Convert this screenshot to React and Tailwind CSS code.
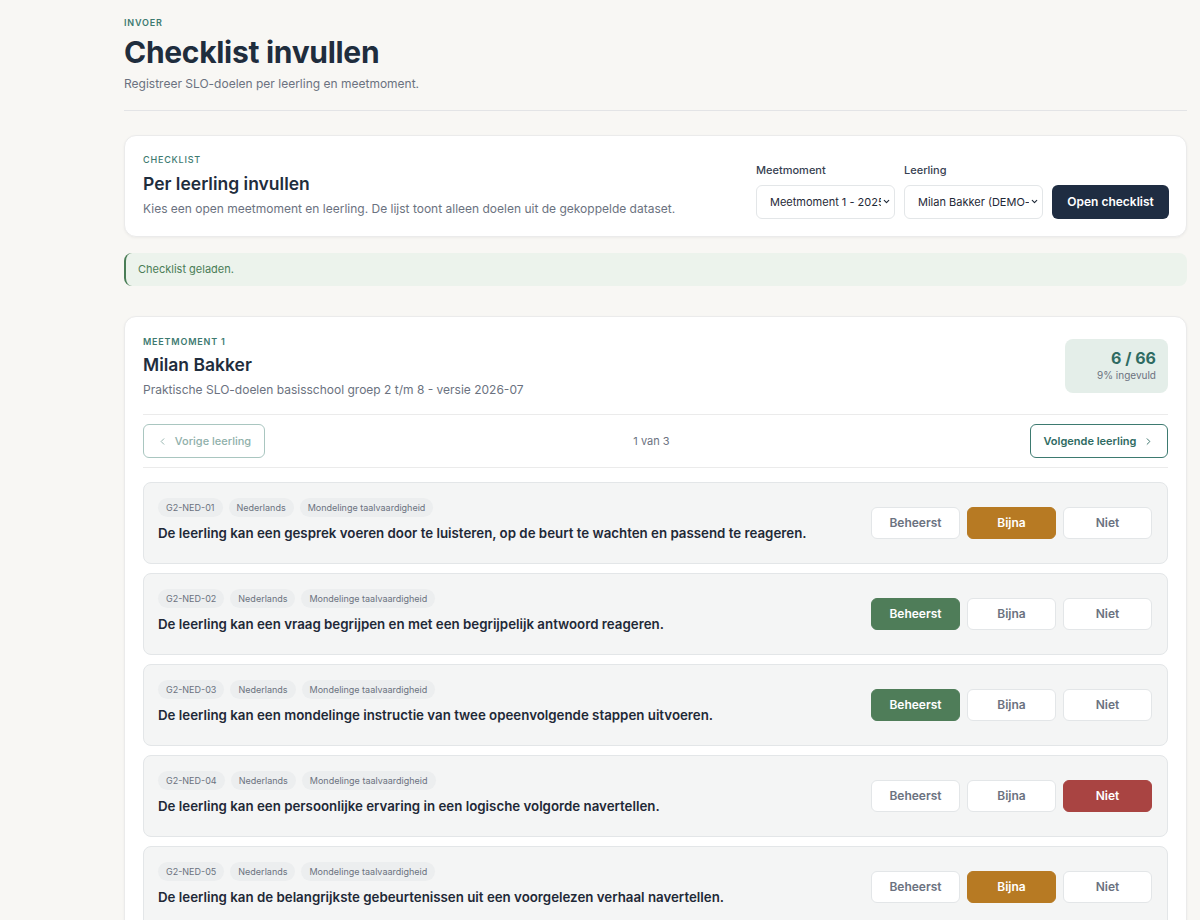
import { ChevronLeft, ChevronRight, ChevronDown } from 'lucide-react';

const goals = [
  { code: 'G2-NED-01', text: 'De leerling kan een gesprek voeren door te luisteren, op de beurt te wachten en passend te reageren.', value: 'bijna' },
  { code: 'G2-NED-02', text: 'De leerling kan een vraag begrijpen en met een begrijpelijk antwoord reageren.', value: 'beheerst' },
  { code: 'G2-NED-03', text: 'De leerling kan een mondelinge instructie van twee opeenvolgende stappen uitvoeren.', value: 'beheerst' },
  { code: 'G2-NED-04', text: 'De leerling kan een persoonlijke ervaring in een logische volgorde navertellen.', value: 'niet' },
  { code: 'G2-NED-05', text: 'De leerling kan de belangrijkste gebeurtenissen uit een voorgelezen verhaal navertellen.', value: 'bijna' },
];

const options = [
  { key: 'beheerst', label: 'Beheerst', active: 'bg-[#4f7d59] border-[#4f7d59] text-white' },
  { key: 'bijna', label: 'Bijna', active: 'bg-[#b77a23] border-[#b77a23] text-white' },
  { key: 'niet', label: 'Niet', active: 'bg-[#a94442] border-[#a94442] text-white' },
];

const Chip = ({ children }) => (
  <span className="h-[19px] px-2 rounded-full bg-[#eceeef] text-[9px] text-[#6b7280] flex items-center">
    {children}
  </span>
);

const GoalRow = ({ goal }) => (
  <div className="h-[82px] rounded-lg border border-[#e3e6e8] bg-[#f4f5f5] flex justify-between pl-[14px] pr-[15px]">
    <div className="flex flex-col gap-[7px] pt-[15px]">
      <div className="flex gap-[6px]">
        <Chip>{goal.code}</Chip>
        <Chip>Nederlands</Chip>
        <Chip>Mondelinge taalvaardigheid</Chip>
      </div>
      <div className="text-[13.3px] font-semibold text-[#1f2937]">{goal.text}</div>
    </div>
    <div className="flex gap-[7px] self-center">
      {options.map((o) => (
        <button
          key={o.key}
          className={`w-[89px] h-[32px] rounded-md border text-[12px] font-semibold ${
            goal.value === o.key ? o.active : 'bg-white border-[#e3e6e8] text-[#6b7280]'
          }`}
        >
          {o.label}
        </button>
      ))}
    </div>
  </div>
);

const Select = ({ label, value }) => (
  <div className="flex flex-col gap-[6px]">
    <span className="text-[11px] text-[#374151] font-medium">{label}</span>
    <div className="w-[139px] h-[34px] rounded-md border border-[#e3e6e8] bg-white flex items-center pl-[13px] pr-[3px] gap-[1px]">
      <span className="text-[11px] text-[#1f2937] whitespace-nowrap overflow-hidden flex-1 min-w-0">{value}</span>
      <ChevronDown size={9} strokeWidth={3} className="text-[#1f2937] shrink-0" />
    </div>
  </div>
);

export default function App() {
  return (
    <div className="min-h-[920px] bg-[#f8f7f4] pl-[124px] pr-[13px] font-['Inter',sans-serif]">
      <header className="pt-[16px] pb-[17px] border-b border-[#e3e4e6]">
        <div className="text-[9px] font-semibold tracking-[0.8px] text-[#3d7a70]">INVOER</div>
        <h1 className="mt-[4px] text-[30px] leading-[36px] font-bold text-[#1f2d3d] tracking-[-0.3px]">Checklist invullen</h1>
        <p className="mt-[5px] text-[12px] text-[#6b7280]">Registreer SLO-doelen per leerling en meetmoment.</p>
      </header>

      <section className="mt-[24px] h-[102px] rounded-xl bg-white border border-[#ebebeb] shadow-[0_1px_3px_rgba(0,0,0,0.05)] flex items-center justify-between pl-[18px] pr-[17px]">
        <div className="flex flex-col">
          <span className="text-[9px] font-medium tracking-[0.8px] text-[#3d7a70]">CHECKLIST</span>
          <h2 className="mt-[4px] text-[17.5px] font-semibold text-[#1f2d3d]">Per leerling invullen</h2>
          <p className="mt-[3px] text-[12px] text-[#6b7280]">Kies een open meetmoment en leerling. De lijst toont alleen doelen uit de gekoppelde dataset.</p>
        </div>
        <div className="flex items-end gap-[9px] pt-[10px]">
          <Select label="Meetmoment" value="Meetmoment 1 - 2025-'" />
          <Select label="Leerling" value="Milan Bakker (DEMO-H" />
          <button className="h-[34px] w-[117px] rounded-md bg-[#1f2d42] text-white text-[12px] font-semibold">Open checklist</button>
        </div>
      </section>

      <div className="mt-[16px] h-[33px] rounded-lg bg-[#ecf3ec] border-l-2 border-[#4a7d56] flex items-center pl-[12px] text-[11px] text-[#4a7d56]">
        Checklist geladen.
      </div>

      <section className="mt-[30px] rounded-xl bg-white border border-[#ebebeb] shadow-[0_1px_3px_rgba(0,0,0,0.05)] px-[18px] pt-[18px] pb-[20px]">
        <div className="flex justify-between items-start pb-[15px] border-b border-[#ebebeb]">
          <div className="flex flex-col">
            <span className="text-[9px] font-semibold tracking-[0.8px] text-[#3d7a70]">MEETMOMENT 1</span>
            <h2 className="mt-[4px] text-[17.5px] font-semibold text-[#1f2d3d]">Milan Bakker</h2>
            <p className="mt-[3px] text-[12px] text-[#6b7280]">Praktische SLO-doelen basisschool groep 2 t/m 8 - versie 2026-07</p>
          </div>
          <div className="mt-[4px] w-[103px] h-[54px] rounded-lg bg-[#e4eee9] flex flex-col items-end justify-center pr-[12px]">
            <span className="text-[16px] font-bold text-[#2f6b62] leading-[20px]">6 / 66</span>
            <span className="text-[10px] text-[#6b7280]">9% ingevuld</span>
          </div>
        </div>

        <div className="flex items-center justify-between py-[9px] border-b border-[#ebebeb]">
          <button className="h-[34px] w-[122px] rounded-md border border-[#a9c6c0] bg-white text-[#8fb0aa] text-[11px] font-medium flex items-center justify-center gap-[7px]">
            <ChevronLeft size={11} strokeWidth={2} />
            Vorige leerling
          </button>
          <span className="text-[11px] text-[#6b7280] pl-[8px]">1 van 3</span>
          <button className="h-[34px] w-[138px] rounded-md border border-[#3d7a70] bg-white text-[#2f6b62] text-[11px] font-semibold flex items-center justify-center gap-[7px]">
            Volgende leerling
            <ChevronRight size={11} strokeWidth={2} />
          </button>
        </div>

        <div className="mt-[14px] flex flex-col gap-[9px]">
          {goals.map((g) => (
            <GoalRow key={g.code} goal={g} />
          ))}
        </div>
      </section>
    </div>
  );
}
